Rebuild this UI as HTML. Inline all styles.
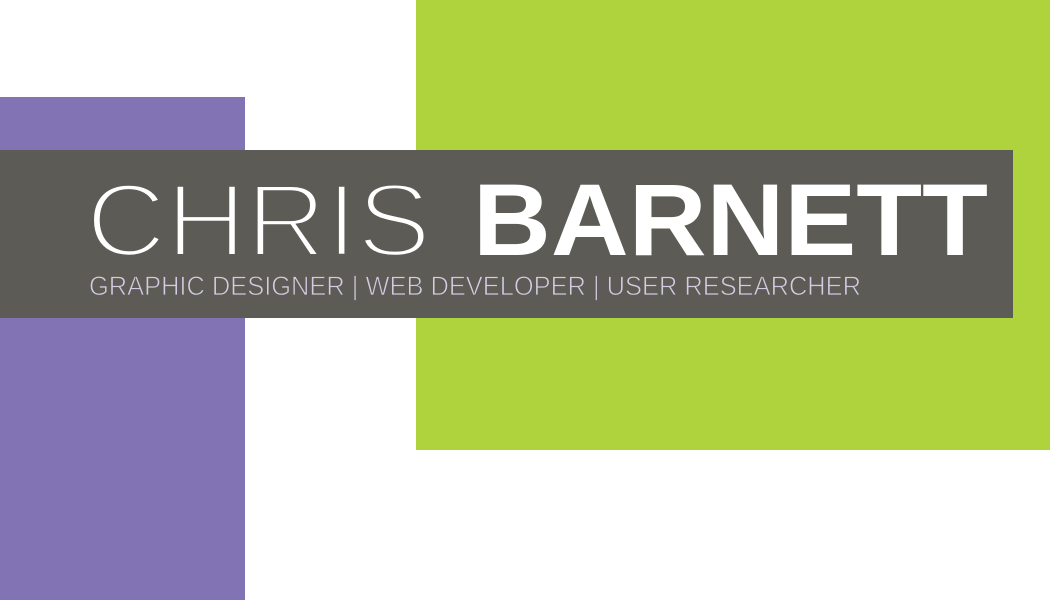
<!DOCTYPE html>
<html><head><meta charset="utf-8"><style>
html,body{margin:0;padding:0;width:1050px;height:600px;overflow:hidden;background:#fff}
</style></head><body>
<svg width="1050" height="600" xmlns="http://www.w3.org/2000/svg" style="display:block">
<rect x="0" y="0" width="1050" height="600" fill="#fff"/>
<rect x="416" y="0" width="634" height="450" fill="#afd33d"/>
<rect x="0" y="97" width="245" height="503" fill="#8274b4"/>
<rect x="0" y="150" width="1013" height="168" fill="#5d5b55"/>
<text x="86" y="256" font-family="Liberation Sans, sans-serif" font-size="104" fill="#fff" stroke="#5d5b55" stroke-width="4.5" textLength="345" lengthAdjust="spacingAndGlyphs">CHRIS</text>
<text x="473" y="255" font-family="Liberation Sans, sans-serif" font-weight="bold" font-size="102" fill="#fff" textLength="515" lengthAdjust="spacingAndGlyphs">BARNETT</text>
<text x="89" y="295" font-family="Liberation Sans, sans-serif" font-size="26.5" fill="#d3cbe2" stroke="#5d5b55" stroke-width="0.8" textLength="772" lengthAdjust="spacingAndGlyphs">GRAPHIC DESIGNER | WEB DEVELOPER | USER RESEARCHER</text>
</svg>
</body></html>
